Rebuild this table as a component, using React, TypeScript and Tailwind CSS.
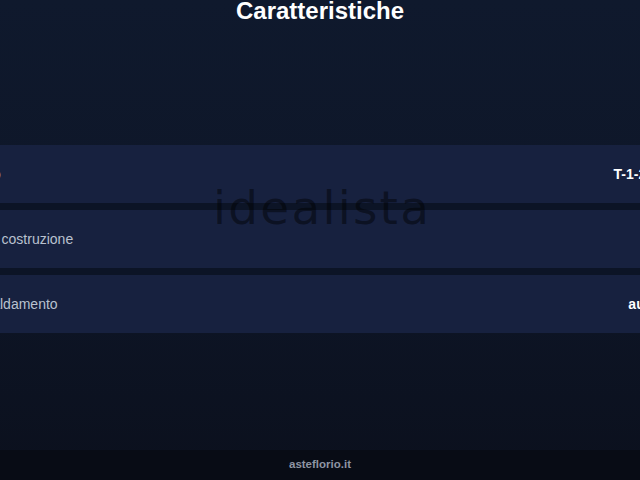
const rows = [
  { label: "Piano", value: "T-1-2-3-4-5-6" },
  { label: "Anno costruzione", value: "" },
  { label: "Riscaldamento", value: "autonomo" },
];

export default function App() {
  return (
    <div
      className="relative flex h-[480px] w-[640px] flex-col overflow-hidden bg-gradient-to-b from-[#0f192d] via-[#0e1628] to-[#0b101d]"
      style={{ fontFamily: '"Liberation Sans", Arial, sans-serif' }}
    >
      <h1 className="-mt-[3px] text-center text-[24px] font-bold leading-[28px] text-white">
        Caratteristiche
      </h1>

      <div className="mt-[120px] -ml-[35px] flex w-[731px] flex-col gap-[7px] bg-[#0c1426]">
        {rows.map((r) => (
          <div
            key={r.label}
            className="flex h-[58px] items-center justify-between bg-[#17213f] text-[14px]"
          >
            <span className="whitespace-nowrap text-[#b9c1cf]">{r.label}</span>
            <span className="whitespace-nowrap font-bold text-white">{r.value}</span>
          </div>
        ))}
      </div>

      {/* watermark */}
      <div className="pointer-events-none absolute left-[213px] top-[180px] select-none whitespace-nowrap font-['DejaVu_Sans',sans-serif] text-[47px] leading-[56px] tracking-[2.2px] text-black/45">
        idealista
      </div>

      <footer className="mt-auto flex h-[30px] items-center justify-center bg-[#080c15]">
        <span className="text-[11.5px] font-bold text-[#8e95a3]">asteflorio.it</span>
      </footer>
    </div>
  );
}
